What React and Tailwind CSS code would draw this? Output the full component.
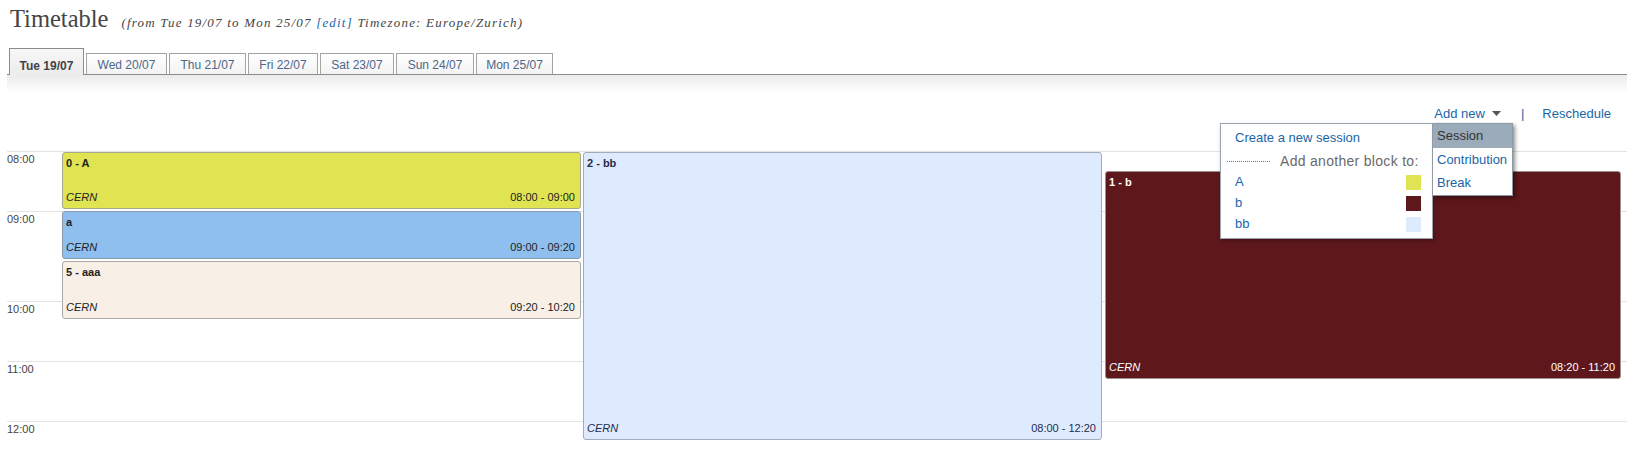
import React from 'react'

const days = [
  { label: 'Tue 19/07', w: 'w-[75px]', active: true },
  { label: 'Wed 20/07', w: 'w-[81px]' },
  { label: 'Thu 21/07', w: 'w-[77px]' },
  { label: 'Fri 22/07', w: 'w-[70px]' },
  { label: 'Sat 23/07', w: 'w-[74px]' },
  { label: 'Sun 24/07', w: 'w-[78px]' },
  { label: 'Mon 25/07', w: 'w-[77px]' },
]

const hours = [
  { label: '08:00', h: 'h-[60px]' },
  { label: '09:00', h: 'h-[90px]' },
  { label: '10:00', h: 'h-[60px]' },
  { label: '11:00', h: 'h-[60px]' },
  { label: '12:00', h: 'h-[40px]' },
]

const blocks = [
  { title: '0 - A', time: '08:00 - 09:00', pos: 'left-[62px] top-[1px] w-[519px] h-[57px]', tone: 'bg-[#e0e453] border-[#a9a98f] text-[#222]' },
  { title: 'a', time: '09:00 - 09:20', pos: 'left-[62px] top-[60px] w-[519px] h-[48px]', tone: 'bg-[#8fbfee] border-[#8a9bb0] text-[#222]' },
  { title: '5 - aaa', time: '09:20 - 10:20', pos: 'left-[62px] top-[110px] w-[519px] h-[58px]', tone: 'bg-[#f8f0e7] border-[#aaa] text-[#222]' },
  { title: '2 - bb', time: '08:00 - 12:20', pos: 'left-[583px] top-[1px] w-[519px] h-[288px]', tone: 'bg-[#deeafd] border-[#a3abb8] text-[#1e2d4d]' },
  { title: '1 - b', time: '08:20 - 11:20', pos: 'left-[1105px] top-[20px] w-[516px] h-[208px]', tone: 'bg-[#5e181c] border-[#a09090] text-white' },
]

const sessions = [
  { name: 'A', color: 'bg-[#e0e453]' },
  { name: 'b', color: 'bg-[#5e181c]' },
  { name: 'bb', color: 'bg-[#deeafd]' },
]

const Block = ({ title, time, pos, tone }) => (
  <div className={`absolute ${pos} ${tone} flex flex-col justify-between border rounded-[3px] pl-[3px] pr-[5px] pt-[4px] pb-[4px] text-[11px] leading-[13px]`}>
    <div className="font-bold">{title}</div>
    <div className="flex justify-between">
      <span className="italic">CERN</span>
      <span>{time}</span>
    </div>
  </div>
)

export default function App() {
  return (
    <div className="relative w-[1641px] h-[453px] overflow-hidden bg-white font-['Liberation_Sans',Arial,sans-serif]">
      {/* title */}
      <div className="flex items-baseline pl-[10px] pt-[7px]">
        <h1 className="font-['Liberation_Serif',serif] text-[24.5px] leading-[24px] text-[#444]">Timetable</h1>
        <span className="ml-[13px] font-['Liberation_Serif',serif] italic text-[13px] tracking-[1.2px] text-[#444]">
          (from Tue 19/07 to Mon 25/07 <span className="text-[#1a65a8]">[edit]</span> Timezone: Europe/Zurich)
        </span>
      </div>

      {/* day tabs */}
      <div className="mt-[15px] ml-[7px] w-[1620px] h-[27px] flex items-end gap-[2px] pl-[2px] border-b border-[#8c8c8c]">
        {days.map((d) =>
          d.active ? (
            <div
              key={d.label}
              className={`${d.w} -mb-px h-[27px] flex items-start justify-center pt-[10px] border border-b-0 border-[#8c8c8c] bg-linear-to-b from-[#f7f7f7] to-[#ececec] text-[12px] leading-[14px] font-bold text-[#444]`}
            >
              {d.label}
            </div>
          ) : (
            <div
              key={d.label}
              className={`${d.w} h-[21px] flex items-start justify-center pt-[4px] border border-b-0 border-[#a4a4a4] bg-linear-to-b from-white to-[#f3f3f3] text-[12px] leading-[14px] text-[#4d6789]`}
            >
              {d.label}
            </div>
          )
        )}
      </div>
      <div className="ml-[7px] w-[1620px] h-[18px] bg-linear-to-b from-[#ebebeb] to-white" />

      {/* toolbar */}
      <div className="mt-[13px] flex justify-end items-center pr-[30px] h-[16px] text-[13px] leading-[16px] text-[#1a65a8]">
        <span>Add new</span>
        <svg className="ml-[7px]" width="9" height="5" viewBox="0 0 9 5">
          <path d="M0 0h9L4.5 5z" fill="#555" />
        </svg>
        <span className="ml-[20px]">|</span>
        <span className="ml-[18px]">Reschedule</span>
      </div>

      {/* hour grid + blocks */}
      <div className="relative mt-[29px]">
        {hours.map((h) => (
          <div key={h.label} className={`${h.h} ml-[7px] w-[1620px] border-t border-[#e3e3e3] pt-[1px] text-[11px] leading-[13px] text-[#444]`}>
            {h.label}
          </div>
        ))}
        {blocks.map((b) => (
          <Block key={b.title} {...b} />
        ))}
      </div>

      {/* add-new menu */}
      <div className="absolute left-[1220px] top-[123px] flex items-start text-[13px] leading-[16px]">
        <div className="w-[213px] h-[116px] border border-[#9aa4ad] bg-white shadow-[1px_2px_4px_rgba(0,0,0,0.25)]">
          <div className="pl-[14px] pt-[6px] text-[#1a65a8]">Create a new session</div>
          <div className="mt-[7px] flex items-center pl-[6px]">
            <div className="w-[43px] border-t border-dotted border-[#777]" />
            <span className="ml-[10px] text-[14px] tracking-[0.3px] text-[#6a6a6a]">Add another block to:</span>
          </div>
          <div className="mt-[3px] flex flex-col gap-px pl-[14px] pr-[11px]">
            {sessions.map((s) => (
              <div key={s.name} className="h-[20px] flex items-center justify-between text-[#1a65a8]">
                <span>{s.name}</span>
                <span className={`w-[15px] h-[15px] ${s.color}`} />
              </div>
            ))}
          </div>
        </div>
        <div className="w-[80px] border border-l-0 border-[#8d99a5] bg-white shadow-[2px_2px_4px_rgba(0,0,0,0.45)]">
          <div className="h-[24px] flex items-center pl-[4px] bg-[#9babb9] text-[#333]">Session</div>
          <div className="h-[23px] flex items-center pl-[4px] text-[#1a65a8]">Contribution</div>
          <div className="h-[24px] flex items-center pl-[4px] text-[#1a65a8]">Break</div>
        </div>
      </div>
    </div>
  )
}
